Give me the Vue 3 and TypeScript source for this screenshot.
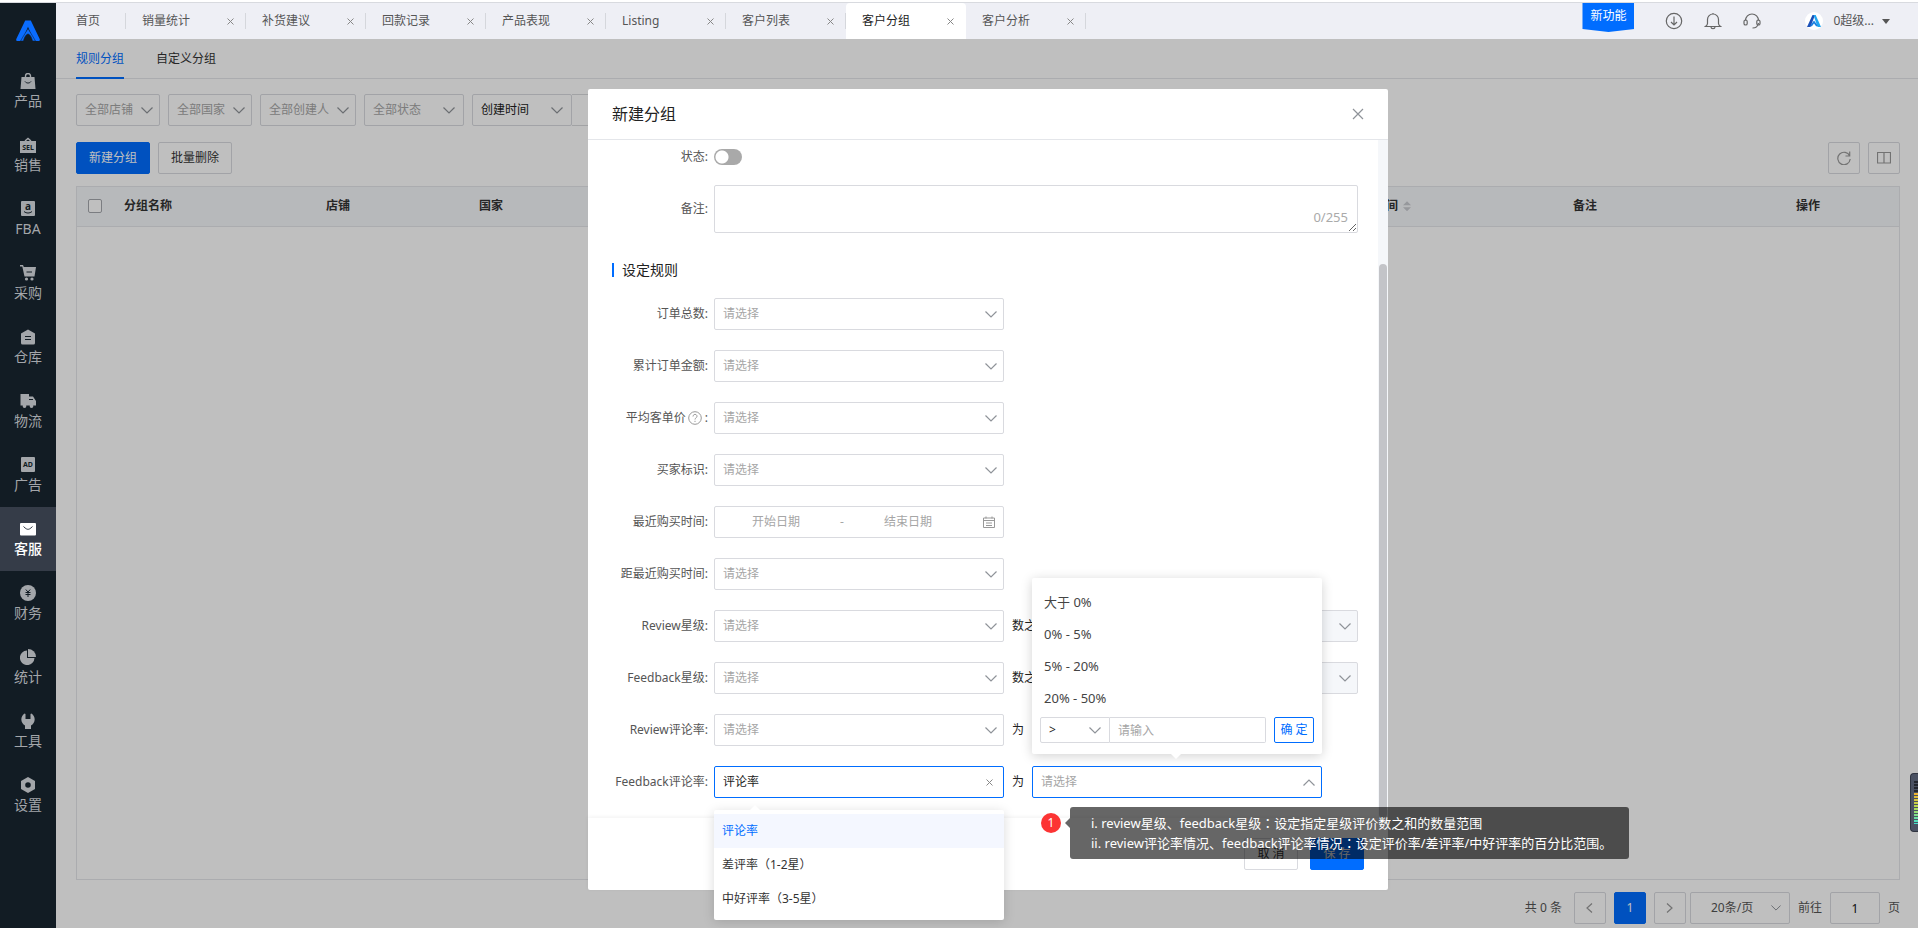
<script setup lang="ts">
import { ref } from 'vue'

interface RuleRow {
  id: string
  label: string
  kind: 'select' | 'range' | 'stars' | 'rate' | 'active'
  help?: boolean
}

const tabs = ['销量统计', '补货建议', '回款记录', '产品表现', 'Listing', '客户列表', '客户分组', '客户分析']
const activeTab = '客户分组'

const menu = [
  { name: '产品', icon: 'bag' },
  { name: '销售', icon: 'sel' },
  { name: 'FBA', icon: 'fba' },
  { name: '采购', icon: 'cart' },
  { name: '仓库', icon: 'house' },
  { name: '物流', icon: 'truck' },
  { name: '广告', icon: 'ad' },
  { name: '客服', icon: 'mail' },
  { name: '财务', icon: 'yen' },
  { name: '统计', icon: 'pie' },
  { name: '工具', icon: 'wrench' },
  { name: '设置', icon: 'gear' },
]

const filters = [
  { name: '全部店铺', size: 'w84' },
  { name: '全部国家', size: 'w84' },
  { name: '全部创建人', size: 'w96' },
  { name: '全部状态', size: 'w100' },
]

const rules: RuleRow[] = [
  { id: 'orders', label: '订单总数:', kind: 'select' },
  { id: 'amount', label: '累计订单金额:', kind: 'select' },
  { id: 'average', label: '平均客单价', kind: 'select', help: true },
  { id: 'buyer', label: '买家标识:', kind: 'select' },
  { id: 'recent', label: '最近购买时间:', kind: 'range' },
  { id: 'since', label: '距最近购买时间:', kind: 'select' },
  { id: 'review-star', label: 'Review星级:', kind: 'stars' },
  { id: 'feedback-star', label: 'Feedback星级:', kind: 'stars' },
  { id: 'review-rate', label: 'Review评论率:', kind: 'rate' },
  { id: 'feedback-rate', label: 'Feedback评论率:', kind: 'active' },
]

const rateTypes = ['评论率', '差评率（1-2星）', '中好评率（3-5星）']
const ranges = ['大于 0%', '0% - 5%', '5% - 20%', '20% - 50%']

const rateType = ref('评论率')
const remark = ref('')
const enabled = ref(false)
const page = ref('1')
</script>

<template>
  <div class="app">
    <div class="strip"></div>
    <div class="shell">
      <aside class="sidebar">
        <a class="logo" href="#" aria-label="Home">
          <svg width="26" height="24" viewBox="0 0 26 24">
            <path d="M10.2 1.5h5.6l8.9 18.4a1.6 1.6 0 0 1-1.5 2.1h-4.4L13 7.800 7.200 22H2.800a1.600 1.600 0 0 1-1.500-2.100z" fill="#0a6cff" />
            <path d="M8.500 22c.5-3 2.500-7 4.500-7s4 4 4.500 7h3L13 9.500 5.500 22z" fill="#0a6cff" stroke="#121c24" stroke-width="0.500" />
          </svg>
        </a>
        <nav>
          <a v-for="m in menu" :key="m.name" href="#" class="menu-item" :class="{ on: m.name === '客服' }">
            <svg width="16" height="16" viewBox="0 0 16 16" fill="currentColor">
              <template v-if="m.icon === 'bag'">
                <path d="M1.500 4h13l1 12H.500z" />
                <path d="M5.500 4.500V3a2.500 2.500 0 0 1 5 0v1.500" fill="none" stroke="currentColor" stroke-width="1.400" />
                <path d="M5 8.500c1.500 2 4.500 2 6 0" fill="none" class="cut" />
              </template>
              <template v-else-if="m.icon === 'sel'">
                <path d="M0 4h16v12H0z" />
                <path d="M5 4L8 1.500 11 4" fill="none" stroke="currentColor" stroke-width="1.500" />
                <text x="8" y="12.500" class="glyph">SEL</text>
              </template>
              <template v-else-if="m.icon === 'fba'">
                <rect x="1" y="0" width="14" height="15" rx="1" />
                <text x="8" y="8.500" class="glyph big">a</text>
                <path d="M4 10.500c2.500 2 5.500 2 8 0" fill="none" class="cut" />
              </template>
              <template v-else-if="m.icon === 'cart'">
                <path d="M0 0h3l.8 2H16l-1.500 9.500H4.500L2.300 1.500H0z" />
                <circle cx="6.500" cy="14" r="1.600" /><circle cx="12" cy="14" r="1.600" />
                <path d="M6.500 7h5.500" class="cut" />
              </template>
              <template v-else-if="m.icon === 'house'">
                <path d="M8 .5l7 4V14a1.500 1.500 0 0 1-1.500 1.500h-11A1.500 1.500 0 0 1 1 14V4.500z" />
                <path d="M5 7.500h6M5 10.500h6" class="cut" />
              </template>
              <template v-else-if="m.icon === 'truck'">
                <path d="M1 1h8v2.500h4l3 4.500v4.500H.500V1z" />
                <circle cx="4.500" cy="13" r="1.900" /><circle cx="11.500" cy="13" r="1.900" />
                <path d="M9 6.500h4" class="cut" />
              </template>
              <template v-else-if="m.icon === 'ad'">
                <rect x="1" y="0" width="14" height="15" rx="1" />
                <text x="8" y="10" class="glyph">AD</text>
              </template>
              <template v-else-if="m.icon === 'mail'">
                <rect x="0" y="2" width="16" height="12.500" rx="1" />
                <path d="M3.500 5.500C6 8 7 8.300 8 8.300s2-.3 4.500-2.800" fill="none" class="cut" />
              </template>
              <template v-else-if="m.icon === 'yen'">
                <circle cx="8" cy="8" r="8" />
                <path d="M5.800 4.500L8 7l2.200-2.500M8 7v5M5.500 7.500h5M5.500 9.500h5" fill="none" class="cut" />
              </template>
              <template v-else-if="m.icon === 'pie'">
                <path d="M7 1.500V9h7.500A7.300 7.300 0 1 1 7 1.500z" />
                <path d="M8 0a8 8 0 0 1 8 8H8z" />
              </template>
              <template v-else-if="m.icon === 'wrench'">
                <path d="M4.500.5A7 7 0 0 0 5 12.500V16h6v-3.500A7 7 0 0 0 11.500.5L10.500 1v5h-5V1z" />
              </template>
              <template v-else>
                <path fill-rule="evenodd" d="M8 0l7 4v8l-7 4-7-4V4zM8 5.200a2.800 2.800 0 1 0 0 5.600 2.800 2.800 0 0 0 0-5.600z" />
              </template>
            </svg>
            <span>{{ m.name }}</span>
          </a>
        </nav>
      </aside>

      <div class="main">
        <header class="topbar">
          <a href="#" class="tab home">首页</a>
          <div v-for="t in tabs" :key="t" class="tab" :class="{ active: t === activeTab }">
            <a href="#">{{ t }}</a>
            <button type="button" class="tab-close" aria-label="Close">
              <svg width="7" height="7" viewBox="0 0 7 7"><path d="M.5.5l6 6M6.500.5l-6 6" /></svg>
            </button>
          </div>
          <div class="tools">
            <button type="button" class="feature">新功能</button>
            <button type="button" class="tool" aria-label="Download">
              <svg width="18" height="18" viewBox="0 0 18 18"><circle cx="9" cy="9" r="7.700" /><path d="M9 4.500v8.300M6 10l3 3 3-3" /></svg>
            </button>
            <button type="button" class="tool" aria-label="Notifications">
              <svg width="18" height="18" viewBox="0 0 18 18"><path d="M1.500 14.500c1.500-1 2-1.700 2-3V7.500a5.500 5.500 0 0 1 11 0v4c0 1.300.5 2 2 3zM7 15c0 2.200 4 2.200 4 0M9 2V1" /></svg>
            </button>
            <button type="button" class="tool" aria-label="Support">
              <svg width="18" height="18" viewBox="0 0 18 18"><path d="M2.500 8.500a6.500 6.500 0 0 1 13 0M15.500 11c-.5 3-2.500 5-6 5" /><rect x="1" y="8" width="3.200" height="5" rx="1.600" /><rect x="13.800" y="8" width="3.200" height="5" rx="1.600" /></svg>
            </button>
            <button type="button" class="user">
              <span class="avatar">
                <svg width="14" height="12" viewBox="0 0 14 12"><path d="M5.500 0H8L3.500 12H0z" fill="#1b50b8" /><path d="M6.500 0h2.200L14 12h-3.500z" fill="#21a6f0" /><path d="M4 11l3-4 3 4" fill="none" stroke="#1b7fe0" stroke-width="1.800" /></svg>
              </span>
              <span>0超级...</span>
              <i class="caret"></i>
            </button>
          </div>
        </header>

        <main class="content">
          <nav class="subtabs">
            <a href="#" class="on">规则分组</a>
            <a href="#">自定义分组</a>
          </nav>

          <div class="filters">
            <div v-for="f in filters" :key="f.name" class="pick" :class="f.size">
              <select :aria-label="f.name"><option>{{ f.name }}</option></select>
              <svg class="chev" width="12" height="7" viewBox="0 0 12 7"><path d="M.5.5L6 6 11.500.5" /></svg>
            </div>
            <div class="joined">
              <div class="pick w100 dark">
                <select aria-label="时间类型"><option>创建时间</option></select>
                <svg class="chev" width="12" height="7" viewBox="0 0 12 7"><path d="M.5.5L6 6 11.500.5" /></svg>
              </div>
              <input type="text" class="span" aria-label="时间范围" />
            </div>
          </div>

          <div class="actions">
            <button type="button" class="btn primary">新建分组</button>
            <button type="button" class="btn">批量删除</button>
            <button type="button" class="square push" aria-label="Refresh">
              <svg width="14" height="14" viewBox="0 0 14 14"><path d="M12.700 5A6.200 6.200 0 1 0 13.200 8M12.700.5V5H8.500" /></svg>
            </button>
            <button type="button" class="square" aria-label="Columns">
              <svg width="14" height="12" viewBox="0 0 14 12"><path d="M.5.500h13v10.500H.500zM7 .5v10.500" /></svg>
            </button>
          </div>

          <div class="grid-box">
            <table>
              <colgroup>
                <col class="c-check" /><col class="c-name" /><col class="c-shop" /><col class="c-land" /><col /><col class="c-wide" /><col class="c-wide" /><col class="c-act" />
              </colgroup>
              <thead>
                <tr>
                  <th><input type="checkbox" aria-label="全选" /></th>
                  <th>分组名称</th>
                  <th>店铺</th>
                  <th>国家</th>
                  <th></th>
                  <th><span class="sortable">创建时间<i class="sort"></i></span></th>
                  <th>备注</th>
                  <th>操作</th>
                </tr>
              </thead>
            </table>
          </div>

          <footer class="pager">
            <span class="total">共 0 条</span>
            <button type="button" class="square" aria-label="Previous"><svg width="7" height="10" viewBox="0 0 7 10"><path d="M6 .5L1 5l5 4.500" /></svg></button>
            <button type="button" class="square current">1</button>
            <button type="button" class="square" aria-label="Next"><svg width="7" height="10" viewBox="0 0 7 10"><path d="M1 .5L6 5 1 9.500" /></svg></button>
            <div class="pick w100 size">
              <select aria-label="每页条数"><option>20条/页</option></select>
              <svg class="chev" width="10" height="6" viewBox="0 0 12 7"><path d="M.5.5L6 6 11.500.5" /></svg>
            </div>
            <label for="goto">前往</label>
            <input id="goto" v-model="page" type="text" class="goto" />
            <span>页</span>
          </footer>

          <div class="mask">
            <section class="dialog" role="dialog" aria-labelledby="dlg-title">
              <header class="dlg-head">
                <h2 id="dlg-title">新建分组</h2>
                <button type="button" class="dlg-close" aria-label="Close">
                  <svg width="12" height="12" viewBox="0 0 12 12"><path d="M1 1l10 10M11 1L1 11" /></svg>
                </button>
              </header>

              <div class="dlg-body">
                <form class="form">
                  <div class="row switch-row">
                    <label for="state">状态:</label>
                    <input id="state" v-model="enabled" type="checkbox" role="switch" class="switch" />
                  </div>
                  <div class="row">
                    <label for="remark">备注:</label>
                    <div class="area">
                      <textarea id="remark" v-model="remark" maxlength="255"></textarea>
                      <span class="count">{{ remark.length }}/255</span>
                    </div>
                  </div>

                  <h3>设定规则</h3>

                  <div v-for="r in rules" :key="r.id" class="row">
                    <label :for="r.id">
                      {{ r.label }}<template v-if="r.help"><svg class="help" width="14" height="14" viewBox="0 0 14 14"><circle cx="7" cy="7" r="6.300" /><path d="M5 5.500C5 2.700 9 2.700 9 5.300 9 6.800 7 6.800 7 8.500M7 9.800v1.200" /></svg>&nbsp;:</template>
                    </label>

                    <div v-if="r.kind === 'range'" class="range">
                      <input :id="r.id" type="text" placeholder="开始日期" />
                      <span class="dash">-</span>
                      <input type="text" placeholder="结束日期" aria-label="结束日期" />
                      <svg width="12" height="12" viewBox="0 0 12 12"><path d="M.5 2h11v9.500H.500zM.5 4.500h11M3 .5v2M9 .5v2M3 7h6M3 9.500h6" /></svg>
                    </div>

                    <div v-else-if="r.kind === 'active'" class="pick field focus">
                      <select :id="r.id" v-model="rateType">
                        <option v-for="t in rateTypes" :key="t">{{ t }}</option>
                      </select>
                      <button type="button" class="clear" aria-label="Clear">
                        <svg width="7" height="7" viewBox="0 0 7 7"><path d="M.5.5l6 6M6.500.5l-6 6" /></svg>
                      </button>
                      <ul class="menu">
                        <li v-for="t in rateTypes" :key="t">
                          <button type="button" :class="{ on: t === rateType }" @click="rateType = t">{{ t }}</button>
                        </li>
                      </ul>
                    </div>

                    <div v-else class="pick field">
                      <select :id="r.id"><option>请选择</option></select>
                      <svg class="chev" width="12" height="7" viewBox="0 0 12 7"><path d="M.5.5L6 6 11.500.5" /></svg>
                    </div>

                    <template v-if="r.kind === 'stars'">
                      <span class="joint">数之和为</span>
                      <div class="pick field off">
                        <select disabled :aria-label="r.label"><option></option></select>
                        <svg class="chev" width="12" height="7" viewBox="0 0 12 7"><path d="M.5.5L6 6 11.500.5" /></svg>
                      </div>
                    </template>

                    <span v-if="r.kind === 'rate'" class="joint">为</span>

                    <template v-if="r.kind === 'active'">
                      <span class="joint">为</span>
                      <div class="pick field focus hint">
                        <select aria-label="百分比范围"><option>请选择</option></select>
                        <svg class="chev" width="12" height="7" viewBox="0 0 12 7"><path d="M.5 6.500L6 1l5.500 5.500" /></svg>
                        <div class="percent">
                          <button v-for="g in ranges" :key="g" type="button" class="choice">{{ g }}</button>
                          <div class="custom">
                            <div class="pick op dark">
                              <select aria-label="比较"><option>&gt;</option></select>
                              <svg class="chev" width="12" height="7" viewBox="0 0 12 7"><path d="M.5.5L6 6 11.500.5" /></svg>
                            </div>
                            <input type="text" placeholder="请输入" aria-label="数值" />
                            <button type="button" class="ok">确 定</button>
                          </div>
                        </div>
                        <div class="note">
                          <span class="num">1</span>
                          <p>i. review星级、feedback星级<span class="mid">：</span>设定指定星级评价数之和的数量范围<br />ii. review评论率情况、feedback评论率情况<span class="mid">：</span>设定评价率/差评率/中好评率的百分比范围。</p>
                        </div>
                      </div>
                    </template>
                  </div>
                </form>
                <div class="track"><div class="thumb"></div></div>
              </div>

              <footer class="dlg-foot">
                <button type="button" class="btn small">取 消</button>
                <button type="button" class="btn small primary">保 存</button>
              </footer>
            </section>
          </div>
        </main>
      </div>
    </div>
    <div class="meter"><div class="bars"></div></div>
  </div>
</template>

<style>
html,
body {
  margin: 0;
  background: #fff;
}
</style>

<style scoped>
.app,
.app * {
  box-sizing: border-box;
}
.app {
  position: relative;
  display: flex;
  flex-direction: column;
  min-height: 100vh;
  overflow: hidden;
  font: 12px/20px "Noto Sans", "Noto Sans CJK SC", sans-serif;
  color: #333;
}
a {
  color: inherit;
  text-decoration: none;
}
button,
input,
select,
textarea {
  margin: 0;
  padding: 0;
  border: 0;
  border-radius: 0;
  background: none;
  font: inherit;
  color: inherit;
  outline: 0;
}
button {
  cursor: pointer;
}
svg {
  display: block;
  flex: none;
}
.strip {
  height: 3px;
  border-bottom: 1px solid #d8dadf;
}
.shell {
  flex: 1;
  display: flex;
}

/* sidebar */
.sidebar {
  flex: none;
  width: 56px;
  background: #121c24;
}
.logo {
  display: flex;
  justify-content: center;
  height: 56px;
  padding-top: 16px;
}
.menu-item {
  display: flex;
  flex-direction: column;
  align-items: center;
  gap: 2px;
  height: 64px;
  padding-top: 14px;
  font-size: 14px;
  color: #a3a6aa;
}
.menu-item .cut {
  stroke: #121c24;
  stroke-width: 1;
}
.menu-item.on {
  background: #353c48;
  color: #fff;
  font-weight: 500;
}
.menu-item.on .cut {
  stroke: #353c48;
}
.glyph {
  font-size: 7px;
  font-weight: 700;
  text-anchor: middle;
  fill: #121c24;
}
.glyph.big {
  font-size: 10px;
}

/* top bar */
.main {
  flex: 1;
  min-width: 0;
  display: flex;
  flex-direction: column;
}
.topbar {
  display: flex;
  height: 36px;
  background: #eeeff5;
  color: #555;
}
.tab {
  position: relative;
  flex: none;
  display: flex;
  align-items: center;
  justify-content: space-between;
  width: 120px;
  padding: 0 12px 0 16px;
}
.tab.home {
  width: 70px;
  padding-left: 20px;
}
.tab::after {
  content: "";
  position: absolute;
  right: 0;
  top: 10px;
  width: 1px;
  height: 16px;
  background: #d5d7dc;
}
.tab.active {
  background: #fff;
  border-radius: 4px 4px 0 0;
  color: #222;
}
.tab.active::after {
  display: none;
}
.tab-close {
  display: flex;
  padding: 0;
}
.tab-close svg,
.clear svg {
  fill: none;
  stroke: #888;
}
.tools {
  display: flex;
  align-items: center;
  margin-left: auto;
  padding-right: 28px;
}
.feature {
  align-self: flex-start;
  width: 52px;
  height: 29px;
  margin-right: 31px;
  padding-bottom: 3px;
  background: #006dff;
  color: #fff;
  line-height: 20px;
  clip-path: polygon(0 0, 100% 0, 100% 26px, 50% 100%, 0 26px);
}
.tool {
  margin-right: 21px;
}
.tool svg {
  fill: none;
  stroke: #666;
  stroke-width: 1.2;
}
.user {
  display: flex;
  align-items: center;
  margin-left: 23px;
  color: #555;
}
.avatar {
  display: flex;
  align-items: center;
  justify-content: center;
  width: 18px;
  height: 18px;
  margin-right: 10px;
  border-radius: 50%;
  background: #fff;
}
.caret {
  margin-left: 8px;
  border: 4px solid transparent;
  border-top: 5px solid #555;
  border-bottom: 0;
}

/* page */
.content {
  position: relative;
  flex: 1;
  display: flex;
  flex-direction: column;
  background: #fff;
}
.subtabs {
  display: flex;
  gap: 32px;
  height: 40px;
  padding: 0 20px;
  border-bottom: 1px solid #e4e6ea;
  line-height: 40px;
}
.subtabs a {
  height: 40px;
}
.subtabs .on {
  border-bottom: 2px solid #006dff;
  color: #006dff;
}
.filters {
  display: flex;
  gap: 8px;
  padding: 15px 18px 0 20px;
}
.joined {
  display: flex;
}
.span {
  width: 220px;
  height: 32px;
  border: 1px solid #d9dadc;
  border-left: 0;
}
.pick {
  position: relative;
  flex: none;
  height: 32px;
  border: 1px solid #d9dadf;
  border-radius: 2px;
  color: #a6a6a6;
}
.pick > select {
  display: block;
  width: 100%;
  height: 100%;
  padding: 0 8px;
  appearance: none;
  opacity: 1;
}
.chev {
  position: absolute;
  right: 6px;
  top: calc(50% - 3px);
  fill: none;
  stroke: #8f9399;
  stroke-width: 1.2;
  pointer-events: none;
}
.w84 {
  width: 84px;
}
.w96 {
  width: 96px;
}
.w100 {
  width: 100px;
}
.w100 .chev {
  right: 8px;
}
.dark {
  color: #222;
}
.actions {
  display: flex;
  gap: 8px;
  padding: 16px 18px 12px 20px;
}
.btn {
  width: 74px;
  height: 32px;
  border: 1px solid #d9dadf;
  border-radius: 2px;
  background: #fff;
}
.btn.primary {
  border-color: #006dff;
  background: #006dff;
  color: #fff;
}
.btn.small {
  width: 54px;
}
.square {
  display: flex;
  align-items: center;
  justify-content: center;
  width: 32px;
  height: 32px;
  border: 1px solid #d9dadf;
  border-radius: 2px;
}
.square svg {
  fill: none;
  stroke: #999;
  stroke-width: 1.2;
}
.push {
  margin-left: auto;
}
.grid-box {
  flex: 1;
  margin: 0 18px 0 20px;
  border: 1px solid #e4e6ea;
}
table {
  width: 100%;
  table-layout: fixed;
  border-collapse: collapse;
}
th {
  height: 39px;
  padding: 0 0 0 12px;
  border-bottom: 1px solid #e4e6ea;
  background: #f5f7fa;
  text-align: left;
  font-weight: 700;
}
th input {
  display: block;
  appearance: none;
  width: 14px;
  height: 14px;
  margin-left: -1px;
  border: 1px solid #a4a7ac;
  border-radius: 2px;
  background: #fff;
}
.c-check {
  width: 35px;
}
.c-name {
  width: 202px;
}
.c-shop,
.c-land {
  width: 153px;
}
.c-wide {
  width: 223px;
}
.c-act {
  width: 115px;
}
.sortable {
  display: flex;
  align-items: center;
  gap: 5px;
}
.sort {
  width: 8px;
  height: 10px;
  background: #c9cbd0;
  clip-path: polygon(50% 0, 100% 40%, 0 40%, 0 60%, 100% 60%, 50% 100%, 0 60%, 0 40%);
}
.pager {
  display: flex;
  align-items: center;
  justify-content: flex-end;
  gap: 8px;
  padding: 12px 18px 4px 20px;
  color: #555;
}
.total {
  margin-right: 4px;
}
.current {
  border-color: #006dff;
  background: #006dff;
  color: #fff;
}
.size {
  margin-left: -4px;
  color: #555;
}
.size > select {
  padding-left: 20px;
}
.goto {
  width: 50px;
  height: 32px;
  border: 1px solid #d9dadf;
  border-radius: 2px;
  text-align: center;
  color: #111;
}

/* dialog */
.mask {
  position: absolute;
  inset: 0;
  padding: 50px 0 0 2px;
  background: rgba(0, 0, 0, 0.25);
}
.dialog {
  width: 800px;
  max-width: 100%;
  margin: 0 auto;
  border-radius: 2px;
  background: #fff;
}
.dlg-head {
  display: flex;
  align-items: center;
  justify-content: space-between;
  height: 51px;
  padding: 0 24px;
  border-bottom: 1px solid #e4e6ea;
}
h2 {
  margin: 0;
  font-size: 16px;
  font-weight: 400;
  color: #222;
}
.dlg-close svg {
  fill: none;
  stroke: #8f9399;
  stroke-width: 1.2;
}
.dlg-body {
  display: flex;
}
.form {
  flex: 1;
  padding: 9px 20px 0 24px;
}
.row {
  display: flex;
  align-items: center;
  margin-bottom: 20px;
}
.row > label {
  display: flex;
  align-items: center;
  justify-content: flex-end;
  width: 96px;
  margin-right: 6px;
  white-space: nowrap;
  color: #555;
}
.switch-row {
  height: 16px;
}
.switch {
  appearance: none;
  width: 28px;
  height: 16px;
  border-radius: 8px;
  background: radial-gradient(circle at 8px 8px, #fff 6px, #a9a9a9 7px);
}
.switch:checked {
  background: radial-gradient(circle at 20px 8px, #fff 6px, #006dff 7px);
}
.area {
  position: relative;
  flex: 1;
  display: flex;
  min-width: 0;
}
.area textarea {
  width: 100%;
  height: 48px;
  padding: 6px 8px;
  border: 1px solid #d9dadf;
  border-radius: 2px;
  resize: vertical;
}
.count {
  position: absolute;
  right: 10px;
  bottom: 6px;
  font-size: 13px;
  color: #aaa;
}
h3 {
  display: flex;
  align-items: center;
  gap: 8px;
  height: 20px;
  margin: 27px 0 18px;
  font-size: 14px;
  font-weight: 400;
  color: #222;
}
h3::before {
  content: "";
  width: 2px;
  height: 14px;
  background: #006dff;
}
.help {
  margin-left: 2px;
  fill: none;
  stroke: #999;
}
.field {
  width: 290px;
}
.focus {
  border-color: #006dff;
  color: #222;
}
.focus.hint {
  color: #a6a6a6;
}
.off {
  background: #f5f7fa;
}
.joint {
  margin: 0 8px;
  color: #222;
}
.clear {
  position: absolute;
  right: 10px;
  top: 0;
  display: flex;
  align-items: center;
  height: 30px;
}
.range {
  display: flex;
  align-items: center;
  width: 290px;
  height: 32px;
  padding: 0 8px;
  border: 1px solid #d9dadf;
  border-radius: 2px;
  color: #a6a6a6;
}
.range input {
  width: 106px;
  text-align: center;
}
.dash {
  width: 26px;
  text-align: center;
}
.range svg {
  margin-left: auto;
  fill: none;
  stroke: #999;
}
::placeholder {
  color: #a6a6a6;
  opacity: 1;
}

/* popups */
.menu {
  position: absolute;
  z-index: 3;
  left: -1px;
  top: 43px;
  width: 290px;
  margin: 0;
  padding: 4px 0;
  border-radius: 2px;
  background: #fff;
  box-shadow: 0 2px 12px rgba(0, 0, 0, 0.15);
  list-style: none;
}
.menu::before,
.percent::after {
  content: "";
  position: absolute;
  border: 5px solid transparent;
}
.menu::before {
  left: 36px;
  top: -5px;
  border-top: 0;
  border-bottom-color: #fff;
}
.menu button {
  width: 100%;
  height: 34px;
  padding: 0 8px;
  text-align: left;
  color: #333;
}
.menu button.on {
  background: #f4f7ff;
  color: #006dff;
}
.percent {
  position: absolute;
  z-index: 3;
  left: -1px;
  bottom: 43px;
  width: 290px;
  padding: 8px 8px 11px;
  border-radius: 2px;
  background: #fff;
  box-shadow: 0 2px 12px rgba(0, 0, 0, 0.18);
}
.percent::after {
  left: 139px;
  bottom: -5px;
  border-bottom: 0;
  border-top-color: #fff;
}
.choice {
  display: block;
  width: 100%;
  height: 32px;
  padding: 0 4px;
  text-align: left;
  font-size: 13px;
  color: #444;
}
.custom {
  display: flex;
  margin-top: 3px;
}
.custom input {
  flex: 1;
  min-width: 0;
  height: 26px;
  margin-right: 8px;
  padding: 0 8px;
  border: 1px solid #d9dadf;
  border-left: 0;
  border-radius: 0 2px 2px 0;
}
.op {
  width: 70px;
  height: 26px;
  border-radius: 2px 0 0 2px;
}
.op .chev {
  right: 8px;
}
.ok {
  width: 40px;
  height: 26px;
  border: 1px solid #006dff;
  border-radius: 2px;
  color: #006dff;
}
.note {
  position: absolute;
  z-index: 4;
  left: 8px;
  top: 40px;
  display: flex;
  align-items: flex-start;
  gap: 9px;
  white-space: nowrap;
}
.num {
  width: 20px;
  height: 20px;
  margin-top: 6px;
  border-radius: 50%;
  background: #fc3434;
  color: #fff;
  text-align: center;
}
.note p {
  position: relative;
  margin: 0;
  padding: 6px 17px 6px 21px;
  border-radius: 3px;
  background: rgba(0, 0, 0, 0.6);
  color: #fff;
  font-size: 13px;
  line-height: 20px;
}
.note p::before {
  content: "";
  position: absolute;
  left: -5px;
  top: 11px;
  border: 5px solid transparent;
  border-left: 0;
  border-right-color: rgba(0, 0, 0, 0.6);
}
.mid {
  font-family: "Noto Sans CJK TC", sans-serif;
  line-height: 1;
}
.track {
  width: 10px;
  padding: 124px 1px 0;
  display: flex;
  background: #f5f7fa;
}
.thumb {
  flex: 1;
  border-radius: 4px;
  background: #c3c4c8;
}
.dlg-foot {
  display: flex;
  justify-content: flex-end;
  gap: 12px;
  padding: 20px 24px;
  box-shadow: 0 -1px 4px rgba(0, 0, 0, 0.06);
}
.meter {
  position: absolute;
  right: 0;
  top: 773px;
  width: 8px;
  height: 59px;
  padding: 7px 0 7px 3px;
  border: 1px solid #2f3440;
  border-right: 0;
  border-radius: 4px 0 0 4px;
  background: #4a5162;
}
.bars {
  height: 100%;
  background:
    repeating-linear-gradient(transparent 0 2px, #4a5162 2px 3px),
    linear-gradient(#23262e 0 12px, #f0b030 12px, #b8dc50 26px, #40e0d0);
}
</style>
